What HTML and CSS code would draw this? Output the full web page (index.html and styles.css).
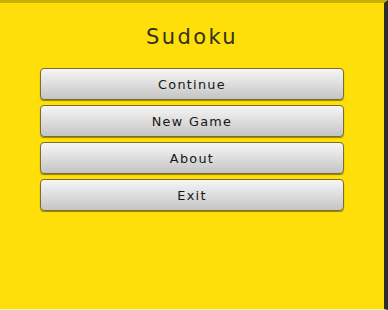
FILE: index.html
```html
<!DOCTYPE html>
<html>
<head>
<meta charset="utf-8">
<link rel="stylesheet" href="styles.css">
</head>
<body>
<div class="screen">
  <h1 class="title">Sudoku</h1>
  <div class="menu">
    <button class="btn">Continue</button>
    <button class="btn">New Game</button>
    <button class="btn">About</button>
    <button class="btn">Exit</button>
  </div>
</div>
</body>
</html>
```
FILE: styles.css
```css
html, body {
  margin: 0;
  padding: 0;
  background: #2e2e2e;
}
.screen {
  width: 388px;
  height: 310px;
  box-sizing: border-box;
  background: #fedf0a;
  border-top: 3px solid #c9b004;
  border-right: 4px solid #2d2d2d;
  border-bottom: 1px solid #f4f0d8;
  padding-top: 22px;
  display: flex;
  flex-direction: column;
  align-items: center;
  font-family: "DejaVu Sans", sans-serif;
}
.title {
  margin: 0;
  font-size: 21px;
  font-weight: normal;
  line-height: 25px;
  letter-spacing: 2.4px;
  color: #33311f;
}
.menu {
  margin-top: 18px;
  display: flex;
  flex-direction: column;
  gap: 5px;
}
.btn {
  width: 304px;
  height: 32px;
  box-sizing: border-box;
  border: 1px solid #7a6c2a;
  border-radius: 4px;
  background: linear-gradient(#f6f6f6, #e0e0e0 45%, #c4c4c4);
  box-shadow: 0 1px 1px rgba(90, 70, 0, 0.6);
  font-family: "DejaVu Sans", sans-serif;
  font-size: 12.8px;
  letter-spacing: 1.3px;
  color: #161616;
  padding: 0;
}
```
